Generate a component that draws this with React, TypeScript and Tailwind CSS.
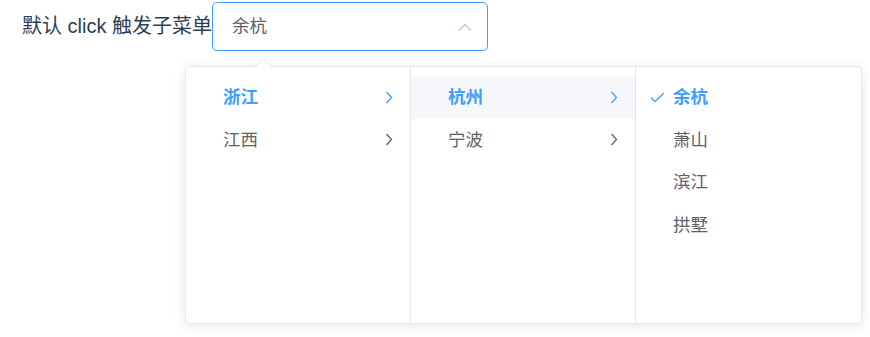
const font = { fontFamily: '"Liberation Sans", "Noto Sans CJK SC", sans-serif' };

type Item = { label: string; active?: boolean; hover?: boolean; children?: boolean; checked?: boolean };

const columns: Item[][] = [
  [
    { label: "浙江", active: true, children: true },
    { label: "江西", children: true },
  ],
  [
    { label: "杭州", active: true, hover: true, children: true },
    { label: "宁波", children: true },
  ],
  [
    { label: "余杭", active: true, checked: true },
    { label: "萧山" },
    { label: "滨江" },
    { label: "拱墅" },
  ],
];

function Chevron({ color }: { color: string }) {
  return (
    <svg width="8" height="13" viewBox="0 0 8 13" fill="none">
      <path d="M1.5 1 L6.5 6.5 L1.5 12" stroke={color} strokeWidth="1.3" />
    </svg>
  );
}

function Check() {
  return (
    <svg width="15" height="11" viewBox="0 0 15 11" fill="none">
      <path d="M1 5.5 L5 9.5 L14 1" stroke="#409eff" strokeWidth="1.3" />
    </svg>
  );
}

export default function App() {
  return (
    <div className="w-[870px] h-[337px] bg-white relative overflow-hidden" style={font}>
      <div className="flex items-center pl-[22px] pt-[2px]">
        <span className="text-[20px] leading-[49px] text-[#2c3e50]">默认 click 触发子菜单</span>
        <div className="relative">
          <div className="w-[276px] h-[49px] border border-[#409eff] rounded-[5px] flex items-center justify-between pl-[19px] pr-[15px]">
            <span className="text-[17.5px] text-[#606266]">余杭</span>
            <svg width="14" height="8" viewBox="0 0 14 8" fill="none">
              <path d="M1 7.5 L7 1.5 L13 7.5" stroke="#c0c4cc" strokeWidth="1.3" />
            </svg>
          </div>
          <div className="absolute left-[-27px] top-[64px] w-[677px] h-[258px] bg-white border border-[#e4e7ed] rounded-[5px] shadow-[0_2px_12px_rgba(0,0,0,0.1)] flex z-10">
            <svg className="absolute left-[68px] top-[-8px]" width="18" height="9" viewBox="0 0 18 9">
              <path d="M0 9 L9 0.5 L18 9 Z" fill="#fff" />
              <path d="M0 8.5 L9 0.5 L18 8.5" fill="none" stroke="#e4e7ed" />
            </svg>
            {columns.map((col, ci) => (
              <div
                key={ci}
                className={`${ci < 2 ? "w-[225px] border-r border-[#e4e7ed]" : "flex-1"} h-full pt-[9px]`}
              >
                {col.map((it) => (
                  <div
                    key={it.label}
                    className={`relative h-[42.5px] flex items-center justify-between pl-[37px] pr-[17px] ${
                      it.hover ? "bg-[#f5f7fa]" : ""
                    }`}
                  >
                    {it.checked && (
                      <span className="absolute left-[14px] top-[16px] flex">
                        <Check />
                      </span>
                    )}
                    <span
                      className={`text-[17.5px] ${
                        it.active ? "text-[#409eff] font-bold" : "text-[#606266]"
                      }`}
                    >
                      {it.label}
                    </span>
                    {it.children && <Chevron color={it.active ? "#409eff" : "#606266"} />}
                  </div>
                ))}
              </div>
            ))}
          </div>
        </div>
      </div>
    </div>
  );
}
